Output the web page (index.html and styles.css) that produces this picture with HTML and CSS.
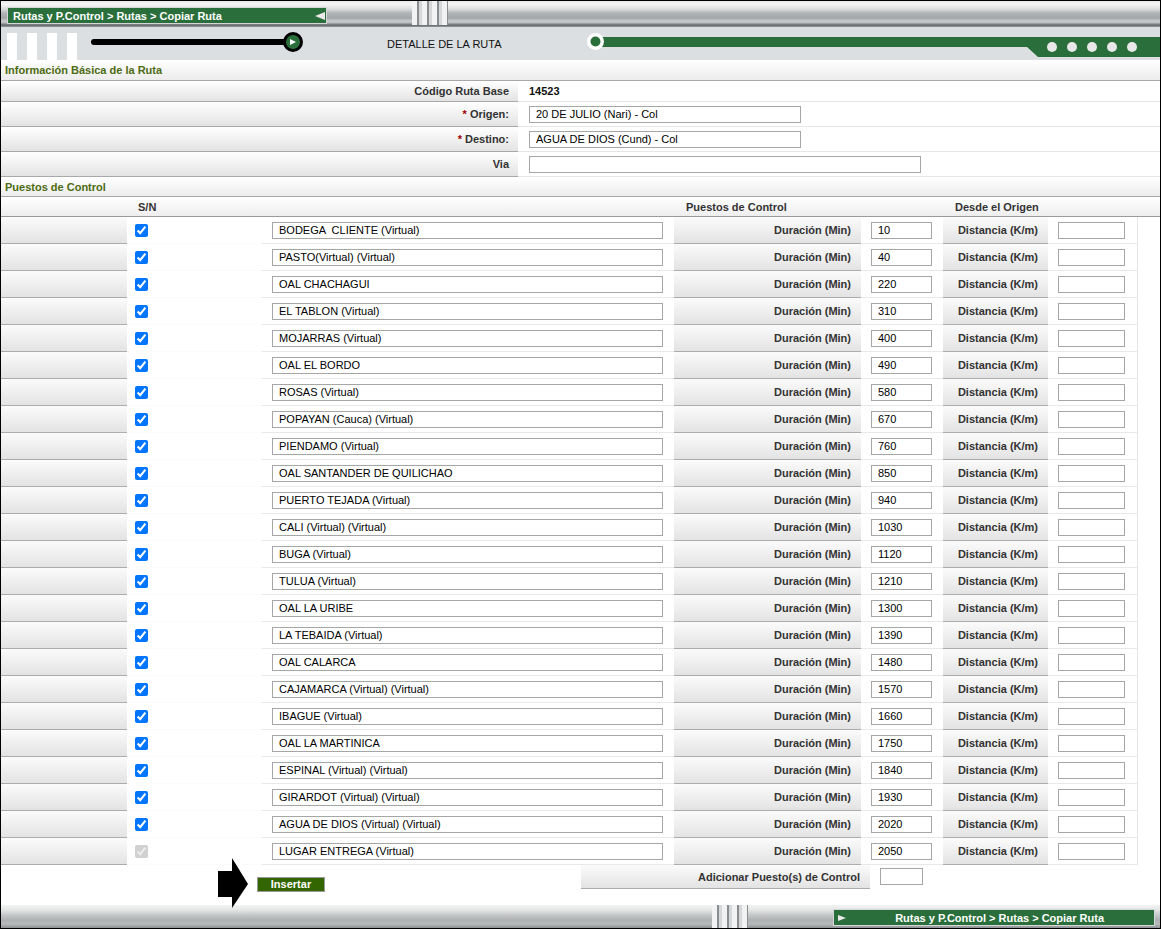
FILE: index.html
```html
<!DOCTYPE html>
<html lang="es">
<head>
<meta charset="utf-8">
<title>Copiar Ruta</title>
<link rel="stylesheet" href="styles.css">
</head>
<body>
<div class="page">
  <header class="topbar">
    <div class="crumb"><span>Rutas y P.Control &gt; Rutas &gt; Copiar Ruta</span><span class="tri-left"></span></div>
    <div class="grip"></div>
  </header>

  <div class="titleband">
    <svg class="deco-left" width="386" height="33" viewBox="0 0 386 33">
      <rect x="6" y="6" width="10" height="27" fill="#fff"/>
      <rect x="26" y="6" width="10" height="27" fill="#fff"/>
      <rect x="46" y="6" width="10" height="27" fill="#fff"/>
      <rect x="66" y="6" width="10" height="27" fill="#fff"/>
      <line x1="93" y1="15" x2="286" y2="15" stroke="#000" stroke-width="6" stroke-linecap="round"/>
      <circle cx="292" cy="15" r="8.5" fill="#2a6f3b" stroke="#000" stroke-width="3"/>
      <polygon points="289,12 289,18 295,15" fill="#fff"/>
    </svg>
    <div class="title">DETALLE DE LA RUTA</div>
    <svg class="deco-right" width="573" height="33" viewBox="0 0 573 33">
      <polygon points="13,10 573,10 573,30 451,30 440,20 13,20" fill="#2a6f3b"/>
      <circle cx="8.5" cy="14.5" r="8.5" fill="#fff"/>
      <circle cx="8.5" cy="14.5" r="5" fill="#2a6f3b"/>
      <circle cx="465" cy="20" r="5" fill="#e8e8e8"/>
      <circle cx="485" cy="20" r="5" fill="#e8e8e8"/>
      <circle cx="505" cy="20" r="5" fill="#e8e8e8"/>
      <circle cx="525" cy="20" r="5" fill="#e8e8e8"/>
      <circle cx="545" cy="20" r="5" fill="#e8e8e8"/>
    </svg>
  </div>

  <div class="sect sect-info">Información Básica de la Ruta</div>
  <div class="info">
    <div class="irow short"><div class="ilbl">Código Ruta Base</div><div class="ival"><b class="code">14523</b></div></div>
    <div class="irow"><div class="ilbl"><span class="req">*</span>&nbsp;Origen:</div><div class="ival"><input class="in w-city" value="20 DE JULIO (Nari) - Col"></div></div>
    <div class="irow"><div class="ilbl"><span class="req">*</span>&nbsp;Destino:</div><div class="ival"><input class="in w-city" value="AGUA DE DIOS (Cund) - Col"></div></div>
    <div class="irow"><div class="ilbl">Via</div><div class="ival"><input class="in w-via" value=""></div></div>
  </div>

  <div class="sect sect-pc">Puestos de Control</div>
  <div class="thead">
    <div></div>
    <div class="th th-sn">S/N</div>
    <div></div>
    <div class="th th-span">Puestos de Control</div>
    <div class="th th-span">Desde el Origen</div>
    <div></div>
  </div>

  <div class="rows">
    <div class="prow"><div class="c lab"></div><div class="c chk"><input type="checkbox" checked></div><div class="c val"><input class="in w-pc" value="BODEGA  CLIENTE (Virtual)"></div><div class="c lab r">Duración (Min)</div><div class="c val"><input class="in w-dur" value="10"></div><div class="c lab r">Distancia (K/m)</div><div class="c val"><input class="in w-dist" value=""></div><div class="c fill"></div></div>
    <div class="prow"><div class="c lab"></div><div class="c chk"><input type="checkbox" checked></div><div class="c val"><input class="in w-pc" value="PASTO(Virtual) (Virtual)"></div><div class="c lab r">Duración (Min)</div><div class="c val"><input class="in w-dur" value="40"></div><div class="c lab r">Distancia (K/m)</div><div class="c val"><input class="in w-dist" value=""></div><div class="c fill"></div></div>
    <div class="prow"><div class="c lab"></div><div class="c chk"><input type="checkbox" checked></div><div class="c val"><input class="in w-pc" value="OAL CHACHAGUI"></div><div class="c lab r">Duración (Min)</div><div class="c val"><input class="in w-dur" value="220"></div><div class="c lab r">Distancia (K/m)</div><div class="c val"><input class="in w-dist" value=""></div><div class="c fill"></div></div>
    <div class="prow"><div class="c lab"></div><div class="c chk"><input type="checkbox" checked></div><div class="c val"><input class="in w-pc" value="EL TABLON (Virtual)"></div><div class="c lab r">Duración (Min)</div><div class="c val"><input class="in w-dur" value="310"></div><div class="c lab r">Distancia (K/m)</div><div class="c val"><input class="in w-dist" value=""></div><div class="c fill"></div></div>
    <div class="prow"><div class="c lab"></div><div class="c chk"><input type="checkbox" checked></div><div class="c val"><input class="in w-pc" value="MOJARRAS (Virtual)"></div><div class="c lab r">Duración (Min)</div><div class="c val"><input class="in w-dur" value="400"></div><div class="c lab r">Distancia (K/m)</div><div class="c val"><input class="in w-dist" value=""></div><div class="c fill"></div></div>
    <div class="prow"><div class="c lab"></div><div class="c chk"><input type="checkbox" checked></div><div class="c val"><input class="in w-pc" value="OAL EL BORDO"></div><div class="c lab r">Duración (Min)</div><div class="c val"><input class="in w-dur" value="490"></div><div class="c lab r">Distancia (K/m)</div><div class="c val"><input class="in w-dist" value=""></div><div class="c fill"></div></div>
    <div class="prow"><div class="c lab"></div><div class="c chk"><input type="checkbox" checked></div><div class="c val"><input class="in w-pc" value="ROSAS (Virtual)"></div><div class="c lab r">Duración (Min)</div><div class="c val"><input class="in w-dur" value="580"></div><div class="c lab r">Distancia (K/m)</div><div class="c val"><input class="in w-dist" value=""></div><div class="c fill"></div></div>
    <div class="prow"><div class="c lab"></div><div class="c chk"><input type="checkbox" checked></div><div class="c val"><input class="in w-pc" value="POPAYAN (Cauca) (Virtual)"></div><div class="c lab r">Duración (Min)</div><div class="c val"><input class="in w-dur" value="670"></div><div class="c lab r">Distancia (K/m)</div><div class="c val"><input class="in w-dist" value=""></div><div class="c fill"></div></div>
    <div class="prow"><div class="c lab"></div><div class="c chk"><input type="checkbox" checked></div><div class="c val"><input class="in w-pc" value="PIENDAMO (Virtual)"></div><div class="c lab r">Duración (Min)</div><div class="c val"><input class="in w-dur" value="760"></div><div class="c lab r">Distancia (K/m)</div><div class="c val"><input class="in w-dist" value=""></div><div class="c fill"></div></div>
    <div class="prow"><div class="c lab"></div><div class="c chk"><input type="checkbox" checked></div><div class="c val"><input class="in w-pc" value="OAL SANTANDER DE QUILICHAO"></div><div class="c lab r">Duración (Min)</div><div class="c val"><input class="in w-dur" value="850"></div><div class="c lab r">Distancia (K/m)</div><div class="c val"><input class="in w-dist" value=""></div><div class="c fill"></div></div>
    <div class="prow"><div class="c lab"></div><div class="c chk"><input type="checkbox" checked></div><div class="c val"><input class="in w-pc" value="PUERTO TEJADA (Virtual)"></div><div class="c lab r">Duración (Min)</div><div class="c val"><input class="in w-dur" value="940"></div><div class="c lab r">Distancia (K/m)</div><div class="c val"><input class="in w-dist" value=""></div><div class="c fill"></div></div>
    <div class="prow"><div class="c lab"></div><div class="c chk"><input type="checkbox" checked></div><div class="c val"><input class="in w-pc" value="CALI (Virtual) (Virtual)"></div><div class="c lab r">Duración (Min)</div><div class="c val"><input class="in w-dur" value="1030"></div><div class="c lab r">Distancia (K/m)</div><div class="c val"><input class="in w-dist" value=""></div><div class="c fill"></div></div>
    <div class="prow"><div class="c lab"></div><div class="c chk"><input type="checkbox" checked></div><div class="c val"><input class="in w-pc" value="BUGA (Virtual)"></div><div class="c lab r">Duración (Min)</div><div class="c val"><input class="in w-dur" value="1120"></div><div class="c lab r">Distancia (K/m)</div><div class="c val"><input class="in w-dist" value=""></div><div class="c fill"></div></div>
    <div class="prow"><div class="c lab"></div><div class="c chk"><input type="checkbox" checked></div><div class="c val"><input class="in w-pc" value="TULUA (Virtual)"></div><div class="c lab r">Duración (Min)</div><div class="c val"><input class="in w-dur" value="1210"></div><div class="c lab r">Distancia (K/m)</div><div class="c val"><input class="in w-dist" value=""></div><div class="c fill"></div></div>
    <div class="prow"><div class="c lab"></div><div class="c chk"><input type="checkbox" checked></div><div class="c val"><input class="in w-pc" value="OAL LA URIBE"></div><div class="c lab r">Duración (Min)</div><div class="c val"><input class="in w-dur" value="1300"></div><div class="c lab r">Distancia (K/m)</div><div class="c val"><input class="in w-dist" value=""></div><div class="c fill"></div></div>
    <div class="prow"><div class="c lab"></div><div class="c chk"><input type="checkbox" checked></div><div class="c val"><input class="in w-pc" value="LA TEBAIDA (Virtual)"></div><div class="c lab r">Duración (Min)</div><div class="c val"><input class="in w-dur" value="1390"></div><div class="c lab r">Distancia (K/m)</div><div class="c val"><input class="in w-dist" value=""></div><div class="c fill"></div></div>
    <div class="prow"><div class="c lab"></div><div class="c chk"><input type="checkbox" checked></div><div class="c val"><input class="in w-pc" value="OAL CALARCA"></div><div class="c lab r">Duración (Min)</div><div class="c val"><input class="in w-dur" value="1480"></div><div class="c lab r">Distancia (K/m)</div><div class="c val"><input class="in w-dist" value=""></div><div class="c fill"></div></div>
    <div class="prow"><div class="c lab"></div><div class="c chk"><input type="checkbox" checked></div><div class="c val"><input class="in w-pc" value="CAJAMARCA (Virtual) (Virtual)"></div><div class="c lab r">Duración (Min)</div><div class="c val"><input class="in w-dur" value="1570"></div><div class="c lab r">Distancia (K/m)</div><div class="c val"><input class="in w-dist" value=""></div><div class="c fill"></div></div>
    <div class="prow"><div class="c lab"></div><div class="c chk"><input type="checkbox" checked></div><div class="c val"><input class="in w-pc" value="IBAGUE (Virtual)"></div><div class="c lab r">Duración (Min)</div><div class="c val"><input class="in w-dur" value="1660"></div><div class="c lab r">Distancia (K/m)</div><div class="c val"><input class="in w-dist" value=""></div><div class="c fill"></div></div>
    <div class="prow"><div class="c lab"></div><div class="c chk"><input type="checkbox" checked></div><div class="c val"><input class="in w-pc" value="OAL LA MARTINICA"></div><div class="c lab r">Duración (Min)</div><div class="c val"><input class="in w-dur" value="1750"></div><div class="c lab r">Distancia (K/m)</div><div class="c val"><input class="in w-dist" value=""></div><div class="c fill"></div></div>
    <div class="prow"><div class="c lab"></div><div class="c chk"><input type="checkbox" checked></div><div class="c val"><input class="in w-pc" value="ESPINAL (Virtual) (Virtual)"></div><div class="c lab r">Duración (Min)</div><div class="c val"><input class="in w-dur" value="1840"></div><div class="c lab r">Distancia (K/m)</div><div class="c val"><input class="in w-dist" value=""></div><div class="c fill"></div></div>
    <div class="prow"><div class="c lab"></div><div class="c chk"><input type="checkbox" checked></div><div class="c val"><input class="in w-pc" value="GIRARDOT (Virtual) (Virtual)"></div><div class="c lab r">Duración (Min)</div><div class="c val"><input class="in w-dur" value="1930"></div><div class="c lab r">Distancia (K/m)</div><div class="c val"><input class="in w-dist" value=""></div><div class="c fill"></div></div>
    <div class="prow"><div class="c lab"></div><div class="c chk"><input type="checkbox" checked></div><div class="c val"><input class="in w-pc" value="AGUA DE DIOS (Virtual) (Virtual)"></div><div class="c lab r">Duración (Min)</div><div class="c val"><input class="in w-dur" value="2020"></div><div class="c lab r">Distancia (K/m)</div><div class="c val"><input class="in w-dist" value=""></div><div class="c fill"></div></div>
    <div class="prow"><div class="c lab"></div><div class="c chk"><input type="checkbox" checked disabled></div><div class="c val"><input class="in w-pc" value="LUGAR ENTREGA (Virtual)"></div><div class="c lab r">Duración (Min)</div><div class="c val"><input class="in w-dur" value="2050"></div><div class="c lab r">Distancia (K/m)</div><div class="c val"><input class="in w-dist" value=""></div><div class="c fill"></div></div>
  </div>

  <div class="actions">
    <button class="btn" type="button">Insertar</button>
    <div class="add-lbl">Adicionar Puesto(s) de Control</div>
    <div class="add-val"><input class="in w-add" value=""></div>
  </div>

  <footer class="footbar">
    <div class="grip grip-foot"></div>
    <div class="crumb crumb-foot"><span class="tri-right"></span><span>Rutas y P.Control &gt; Rutas &gt; Copiar Ruta</span></div>
  </footer>

  <svg class="pointer" width="32" height="52" viewBox="0 0 32 52">
    <polygon points="1,14 15,14 15,1 31,27 15,51 15,40 1,40" fill="#000"/>
  </svg>
</div>
</body>
</html>
```

FILE: styles.css
```css
* { box-sizing: border-box; }

body {
  margin: 0;
  background: #fff;
  font-family: "Liberation Sans", Arial, sans-serif;
  font-size: 11px;
  color: #333;
}

.page {
  width: 1161px;
  height: 929px;
  border: 1px solid #000;
  position: relative;
  overflow: hidden;
  background: #fff;
  display: flex;
  flex-direction: column;
}

/* ---------- top silver bar ---------- */
.topbar {
  height: 26px;
  flex: none;
  display: flex;
  align-items: flex-start;
  background: linear-gradient(to bottom,
    #e9e9e9 0px, #f6f6f6 3px, #dcdddd 8px, #b1b4b6 12px, #a4a7a9 17px,
    #c8cacb 20px, #b9bbbc 22px, #7d8082 23px, #6c6f71 25px, #a6a9ab 26px);
}

.crumb {
  margin: 6px 0 0 6px;
  width: 320px;
  height: 17px;
  flex: none;
  background: #2a6f3b;
  border: 1px solid #d4d6d7;
  color: #fff;
  font-weight: bold;
  font-size: 11px;
  display: flex;
  align-items: center;
  justify-content: space-between;
  padding: 0 1px 0 5px;
}

.tri-left {
  width: 0;
  height: 0;
  border-right: 10px solid #eaeaea;
  border-top: 4px solid transparent;
  border-bottom: 4px solid transparent;
}

.grip {
  margin-left: 85px;
  width: 36px;
  height: 24px;
  flex: none;
  background:
    repeating-linear-gradient(to right,
      #f2f2f2 0px, #f2f2f2 5px, #8b8e90 5px, #8b8e90 7px, #d6d7d8 7px, #d6d7d8 10px);
}

/* ---------- title band ---------- */
.titleband {
  height: 33px;
  flex: none;
  display: flex;
  align-items: center;
  background: #dcdfe2;
}

.deco-left, .deco-right { display: block; flex: none; }

.title {
  width: 200px;
  flex: none;
  font-size: 11px;
  color: #111;
}

/* ---------- section headings ---------- */
.sect {
  flex: none;
  display: flex;
  align-items: center;
  padding-left: 4px;
  font-weight: bold;
  color: #4d6b12;
  background: linear-gradient(to bottom, #ffffff, #ececec);
  border-bottom: 1px solid #a8a8a8;
}
.sect-info { height: 21px; }
.sect-pc { height: 20px; }

/* ---------- basic info ---------- */
.info { flex: none; }

.irow {
  height: 25px;
  display: grid;
  grid-template-columns: 517px 1fr;
}
.irow.short { height: 21px; }

.ilbl {
  display: flex;
  align-items: center;
  justify-content: flex-end;
  padding-right: 9px;
  font-weight: bold;
  color: #333;
  background: linear-gradient(to bottom, #ffffff, #e3e3e3);
  border-bottom: 1px solid #a9a9a9;
}

.req { color: #a00000; }

.ival {
  display: flex;
  align-items: center;
  padding-left: 11px;
  border-bottom: 1px solid #e6e6e6;
}

.code { color: #111; }

/* ---------- inputs ---------- */
.in {
  height: 17px;
  margin: 0;
  border: 1px solid #a6a6a6;
  padding: 0 6px;
  font-family: "Liberation Sans", Arial, sans-serif;
  font-size: 11px;
  color: #000;
  background: #fff;
  outline: none;
}
.w-city { width: 272px; }
.w-via { width: 392px; }
.w-pc { width: 391px; }
.w-dur { width: 61px; }
.w-dist { width: 67px; }
.w-add { width: 43px; }

/* ---------- table ---------- */
.thead, .prow {
  display: grid;
  grid-template-columns: 126px 135px 412px 187px 82px 105px 89px 23px;
}

.thead {
  height: 20px;
  flex: none;
  background: linear-gradient(to bottom, #ffffff, #eeeeee);
  border-bottom: 1px solid #9a9a9a;
  font-weight: bold;
  color: #333;
}
.th { display: flex; align-items: center; }
.th-sn { padding-left: 11px; }
.th-span { grid-column: span 2; padding-left: 12px; }

.rows { flex: none; }

.prow { height: 27px; }

.c {
  display: flex;
  align-items: center;
  height: 27px;
}

.lab {
  background: linear-gradient(to bottom, #fbfbfb, #e3e3e3);
  border-bottom: 1px solid #acacac;
  font-weight: bold;
  color: #333;
}
.lab.r { justify-content: flex-end; padding-right: 10px; }

.chk { padding-left: 8px; border-bottom: 1px solid #fbfbfb; }
.chk input { margin: 0; width: 13px; height: 13px; }

.val { padding-left: 10px; border-bottom: 1px solid #e8e8e8; }

.fill { border-left: 1px solid #e6e6e6; }

/* ---------- actions ---------- */
.actions {
  height: 40px;
  flex: none;
  display: flex;
  align-items: flex-start;
}

.btn {
  margin: 12px 0 0 256px;
  width: 68px;
  height: 15px;
  padding: 0;
  border: 1px solid #9a9a9a;
  background: #336600;
  color: #fff;
  font-family: "Liberation Sans", Arial, sans-serif;
  font-size: 11px;
  font-weight: bold;
  line-height: 13px;
}

.add-lbl {
  margin-left: 256px;
  width: 289px;
  height: 24px;
  display: flex;
  align-items: center;
  justify-content: flex-end;
  padding-right: 10px;
  font-weight: bold;
  color: #333;
  background: linear-gradient(to bottom, #fbfbfb, #e3e3e3);
  border-bottom: 1px solid #acacac;
}

.add-val {
  padding: 3px 0 0 10px;
}

/* ---------- footer ---------- */
.footbar {
  height: 23px;
  flex: none;
  display: flex;
  align-items: flex-start;
  background: linear-gradient(to bottom,
    #f3f3f3 0px, #e4e5e5 5px, #c5c7c8 10px, #aeb1b3 15px, #b8babb 19px, #8e9193 23px);
}

.grip-foot { margin-left: 711px; height: 23px; }

.crumb-foot {
  margin: 4px 0 0 85px;
  width: 322px;
  padding: 0 50px 0 4px;
}

.tri-right {
  width: 0;
  height: 0;
  border-left: 8px solid #eaeaea;
  border-top: 3px solid transparent;
  border-bottom: 3px solid transparent;
}

/* ---------- annotation arrow (overlay) ---------- */
.pointer {
  position: absolute;
  left: 216px;
  top: 856px;
  display: block;
}
```
